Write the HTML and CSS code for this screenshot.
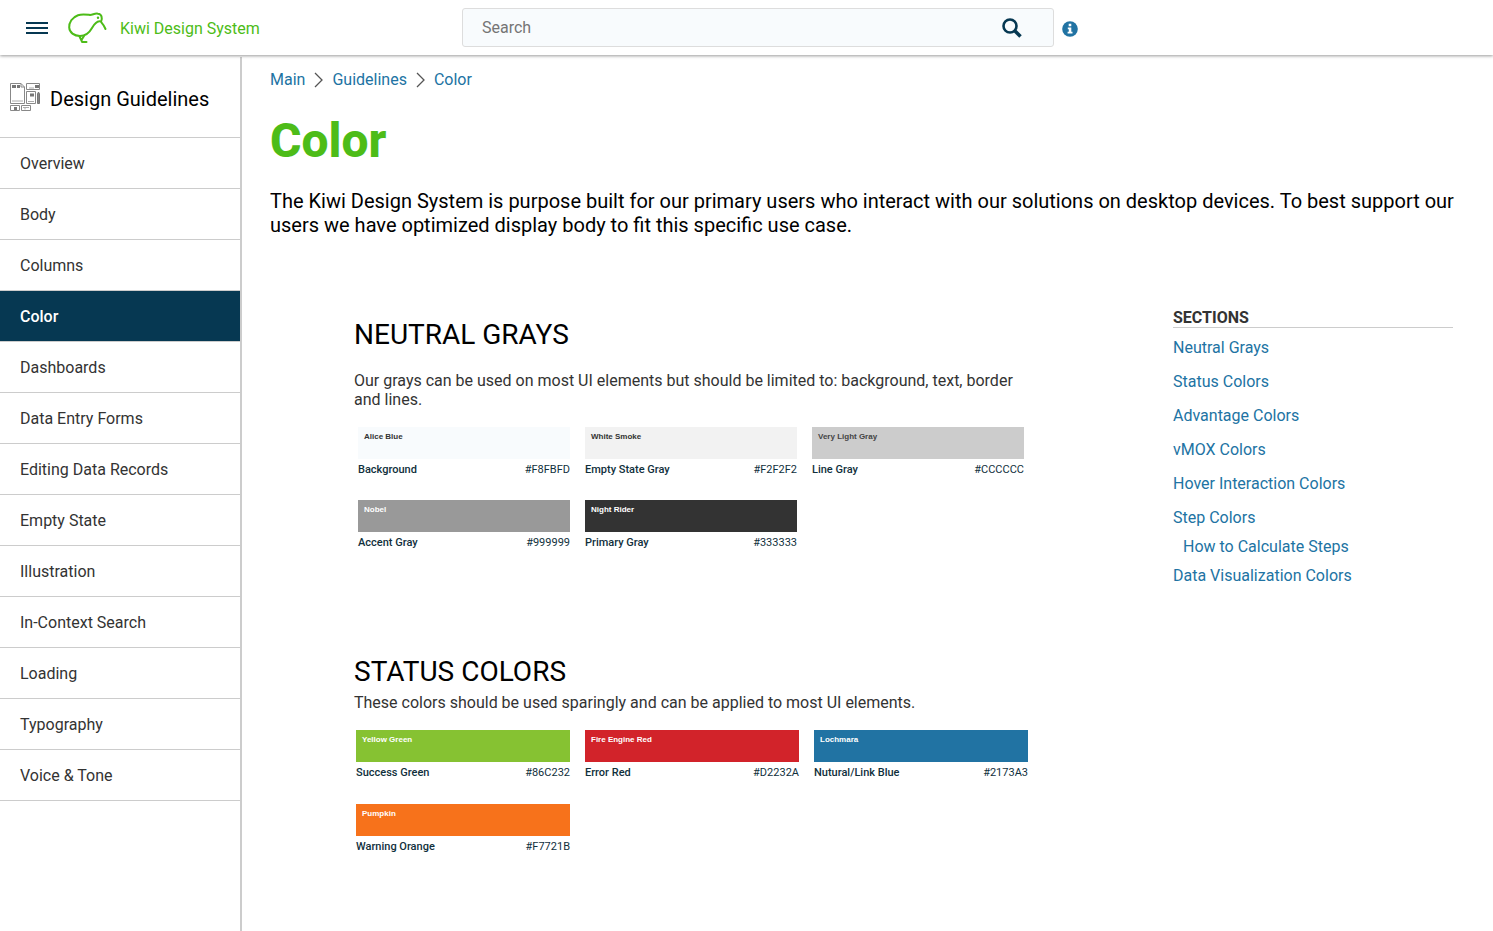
FILE: index.html
```html
<!DOCTYPE html>
<html lang="en">
<head>
<meta charset="utf-8">
<meta name="viewport" content="width=device-width, initial-scale=1">
<title>Color - Kiwi Design System</title>
<link rel="stylesheet" href="styles.css">
</head>
<body>
<header class="topbar">
  <div class="brand">
    <button class="menu-button" type="button" aria-label="Menu">
      <svg width="22" height="12" viewBox="0 0 22 12" aria-hidden="true"><path d="M0 1h22M0 6h22M0 11h22" stroke="#063852" stroke-width="2"/></svg>
    </button>
    <a class="brand-link" href="#">
      <svg class="kiwi" width="40" height="32" viewBox="0 0 40 32" fill="none" stroke="#4dbc18" stroke-width="2" stroke-linecap="round" stroke-linejoin="round" aria-hidden="true">
        <path d="M37.500 17C36 13.500 34.500 11.500 33 9.800C34.800 6 33.500 2 30 1.700C26.500 1 25 3 22 3C18 2.500 14 1.800 10 3.200C4 5.300 1 10.500 1.200 15.500C1.500 20.500 6 24 12 24C18 24 21.500 20.500 24 16C26 12.500 28 9.500 31.500 9.300"/>
        <path d="M11.500 24.500L14.200 30H18.500M13.500 28L16 24"/>
        <circle cx="30" cy="5.700" r="1.200" fill="#4dbc18" stroke="none"/>
      </svg>
      <span>Kiwi Design System</span>
    </a>
  </div>
  <form class="search" role="search">
    <input class="search-input" type="text" placeholder="Search" aria-label="Search">
    <button class="search-button" type="button" aria-label="Submit search">
      <svg width="20" height="20" viewBox="0 0 20 20" fill="none" stroke="#063852" aria-hidden="true"><circle cx="8" cy="8" r="6.500" stroke-width="2.600"/><path d="M13 13l5.500 5.500" stroke-width="3.500"/></svg>
    </button>
  </form>
  <button class="info-button" type="button" aria-label="Information">
    <svg width="16" height="16" viewBox="0 0 16 16" aria-hidden="true"><circle cx="8" cy="8" r="7.800" fill="#2173a3"/><path d="M6.700 2.700h2.600v2.500H6.700zM5.800 6.500h3.500v4.200h1.200v1.800H5.600v-1.800h1.200V8.200h-1z" fill="#fff"/></svg>
  </button>
</header>

<div class="layout">
  <nav class="sidebar" aria-label="Design Guidelines">
    <div class="sidebar-head">
      <svg width="30" height="28" viewBox="0 0 30 28" fill="none" stroke="#888" aria-hidden="true">
        <path d="M.5 20.500V.5H11L14.500 4V20.500zM11 .5V4h3.500M16.500 .5h13v6h-13zM16.500 8.500h9v12h-9zM.5 22.500h9v5h-9zM11.500 22.500h9v5h-9z"/>
        <path d="M2 18h11" stroke="#aaa"/>
        <path d="M2 3.500h4M7 3.500h3M25 3.500h4M20 12h4M4 25.500h3" stroke="#777" stroke-width="3"/>
        <path d="M19 5h5M18 18.500h6M13 24.500h6M15 24.500v2" stroke="#aaa"/>
        <path d="M27.500 11l1-2 1 2v9.500h-2zM27.500 18h2" fill="#888" stroke="#777"/>
      </svg>
      <span>Design Guidelines</span>
    </div>
    <ul class="nav-list">
      <li><a class="nav-link" href="#">Overview</a></li>
      <li><a class="nav-link" href="#">Body</a></li>
      <li><a class="nav-link" href="#">Columns</a></li>
      <li><a class="nav-link active" href="#" aria-current="page">Color</a></li>
      <li><a class="nav-link" href="#">Dashboards</a></li>
      <li><a class="nav-link" href="#">Data Entry Forms</a></li>
      <li><a class="nav-link" href="#">Editing Data Records</a></li>
      <li><a class="nav-link" href="#">Empty State</a></li>
      <li><a class="nav-link" href="#">Illustration</a></li>
      <li><a class="nav-link" href="#">In-Context Search</a></li>
      <li><a class="nav-link" href="#">Loading</a></li>
      <li><a class="nav-link" href="#">Typography</a></li>
      <li><a class="nav-link" href="#">Voice &amp; Tone</a></li>
    </ul>
  </nav>

  <main class="content">
    <nav class="breadcrumb" aria-label="Breadcrumb">
      <a href="#">Main</a>
      <svg width="9" height="16" viewBox="0 0 9 16" fill="none" stroke="#555" stroke-width="1.300" aria-hidden="true"><path d="M1 1l7 7-7 7"/></svg>
      <a href="#">Guidelines</a>
      <svg width="9" height="16" viewBox="0 0 9 16" fill="none" stroke="#555" stroke-width="1.300" aria-hidden="true"><path d="M1 1l7 7-7 7"/></svg>
      <a href="#">Color</a>
    </nav>
    <h1 class="title">Color</h1>
    <p class="lead">The Kiwi Design System is purpose built for our primary users who interact with our solutions on desktop devices. To best support our users we have optimized display body to fit this specific use case.</p>

    <div class="columns">
      <div class="article">
        <section class="group" id="neutral">
          <h2 class="group-title">NEUTRAL GRAYS</h2>
          <p class="group-text spaced">Our grays can be used on most UI elements but should be limited to: background, text, border and lines.</p>
          <div class="swatches neutral">
            <div class="swatch"><div class="chip alice">Alice Blue</div><div class="caption"><strong>Background</strong><span>#F8FBFD</span></div></div>
            <div class="swatch"><div class="chip smoke">White Smoke</div><div class="caption"><strong>Empty State Gray</strong><span>#F2F2F2</span></div></div>
            <div class="swatch"><div class="chip light">Very Light Gray</div><div class="caption"><strong>Line Gray</strong><span>#CCCCCC</span></div></div>
            <div class="swatch"><div class="chip nobel">Nobel</div><div class="caption"><strong>Accent Gray</strong><span>#999999</span></div></div>
            <div class="swatch"><div class="chip rider">Night Rider</div><div class="caption"><strong>Primary Gray</strong><span>#333333</span></div></div>
          </div>
        </section>
        <section class="group" id="status">
          <h2 class="group-title">STATUS COLORS</h2>
          <p class="group-text">These colors should be used sparingly and can be applied to most UI elements.</p>
          <div class="swatches status">
            <div class="swatch"><div class="chip green">Yellow Green</div><div class="caption"><strong>Success Green</strong><span>#86C232</span></div></div>
            <div class="swatch"><div class="chip red">Fire Engine Red</div><div class="caption"><strong>Error Red</strong><span>#D2232A</span></div></div>
            <div class="swatch"><div class="chip blue">Lochmara</div><div class="caption"><strong>Nutural/Link Blue</strong><span>#2173A3</span></div></div>
            <div class="swatch"><div class="chip orange">Pumpkin</div><div class="caption"><strong>Warning Orange</strong><span>#F7721B</span></div></div>
          </div>
        </section>
      </div>
      <aside class="sections">
        <h2 class="sections-title">SECTIONS</h2>
        <ul class="sections-list">
          <li><a href="#neutral">Neutral Grays</a></li>
          <li><a href="#status">Status Colors</a></li>
          <li><a href="#">Advantage Colors</a></li>
          <li><a href="#">vMOX Colors</a></li>
          <li><a href="#">Hover Interaction Colors</a></li>
          <li><a href="#">Step Colors</a>
            <ul class="sub-list"><li><a href="#">How to Calculate Steps</a></li></ul>
          </li>
          <li><a href="#">Data Visualization Colors</a></li>
        </ul>
      </aside>
    </div>
  </main>
</div>
</body>
</html>
```
FILE: styles.css
```css
* { box-sizing: border-box; }

body {
  margin: 0;
  font: 16px/19px Roboto, "Liberation Sans", sans-serif;
  color: #333;
  background: #fff;
}

h1, h2, p, ul { margin: 0; padding: 0; }
ul { list-style: none; }
a { color: #2173a3; text-decoration: none; }
button { padding: 0; border: 0; background: none; cursor: pointer; }
svg { display: block; flex: none; }

.topbar {
  position: relative;
  display: grid;
  grid-template-columns: 462px minmax(0, 592px) auto;
  align-items: center;
  justify-content: start;
  height: 55px;
  background: #fff;
  box-shadow: 0 1px 3px rgba(0, 0, 0, .4);
}

.brand { display: flex; align-items: center; gap: 20px; padding-left: 26px; }
.brand-link { display: flex; align-items: center; gap: 12px; color: #4dbc18; }
.brand-link span { padding-top: 2px; }

.search {
  display: flex;
  align-items: center;
  height: 39px;
  padding: 0 31px 0 19px;
  border: 1px solid #ddd;
  border-radius: 3px;
  background: #f8fbfd;
}
.search-input {
  flex: 1;
  min-width: 0;
  padding: 0;
  border: 0;
  outline: 0;
  background: none;
  font: inherit;
  color: #333;
}
.search-input::placeholder { color: #757575; }
.info-button { margin: 3px 0 0 8px; }

.layout { display: flex; min-height: calc(100vh - 55px); padding-top: 2px; }

.sidebar { flex: none; width: 242px; border-right: 2px solid #ccc; }
.sidebar-head {
  display: flex;
  align-items: center;
  gap: 10px;
  height: 81px;
  padding: 4px 10px 0;
  border-bottom: 1px solid #ccc;
  font-size: 20px;
  line-height: 24px;
  color: #000;
}
.sidebar-head svg { margin-bottom: 4px; }
.nav-link {
  display: block;
  padding: 16px 20px 15px;
  border-bottom: 1px solid #ccc;
  color: #333;
}
.nav-link.active { background: #063852; color: #fff; font-weight: 500; }

.content { flex: 1; min-width: 0; padding: 13px 36px 60px 28px; }
.breadcrumb { display: flex; align-items: center; gap: 9px; }
.title { margin-top: 24px; font-size: 48px; line-height: 56px; font-weight: 800; color: #4dbc18; }
.lead { margin-top: 20px; font-size: 20px; line-height: 24px; color: #000; }

.columns {
  display: grid;
  grid-template-columns: minmax(0, 1fr) 280px;
  gap: 143px;
  margin: 71px 4px 0 0;
}
.article { padding: 10px 0 0 84px; }
.group + .group { margin-top: 104px; }
.group-title { font-size: 28px; line-height: 34px; font-weight: 400; color: #000; }
.group-text { margin-top: 4px; }
.group-text.spaced { margin-top: 19px; }

.swatches { display: grid; column-gap: 15px; margin-top: 18px; }
.neutral { grid-template-columns: repeat(3, 212px); row-gap: 22px; padding-left: 4px; }
.status { grid-template-columns: repeat(3, 214px); row-gap: 23px; padding-left: 2px; }
.chip {
  height: 32px;
  padding: 4px 6px;
  font: bold 8px/12px "Liberation Sans", Arial, sans-serif;
  color: #fff;
}
.caption {
  display: flex;
  justify-content: space-between;
  padding-top: 2px;
  font-size: 11px;
  line-height: 17px;
  color: #10303c;
}
.caption strong { font-weight: 500; }

.alice { background: #f8fbfd; color: #333; }
.smoke { background: #f2f2f2; color: #333; }
.light { background: #ccc; color: #444; }
.nobel { background: #999; }
.rider { background: #333; }
.green { background: #86c232; }
.red { background: #d2232a; }
.blue { background: #2173a3; }
.orange { background: #f7721b; }

.sections-title {
  border-bottom: 1px solid #ccc;
  font-size: 16px;
  line-height: 19px;
  font-weight: 700;
}
.sections-list { display: grid; gap: 15px; padding-top: 10px; }
.sub-list { padding: 10px 0 0 10px; }
.sections-list > li:last-child { margin-top: -5px; }
```
